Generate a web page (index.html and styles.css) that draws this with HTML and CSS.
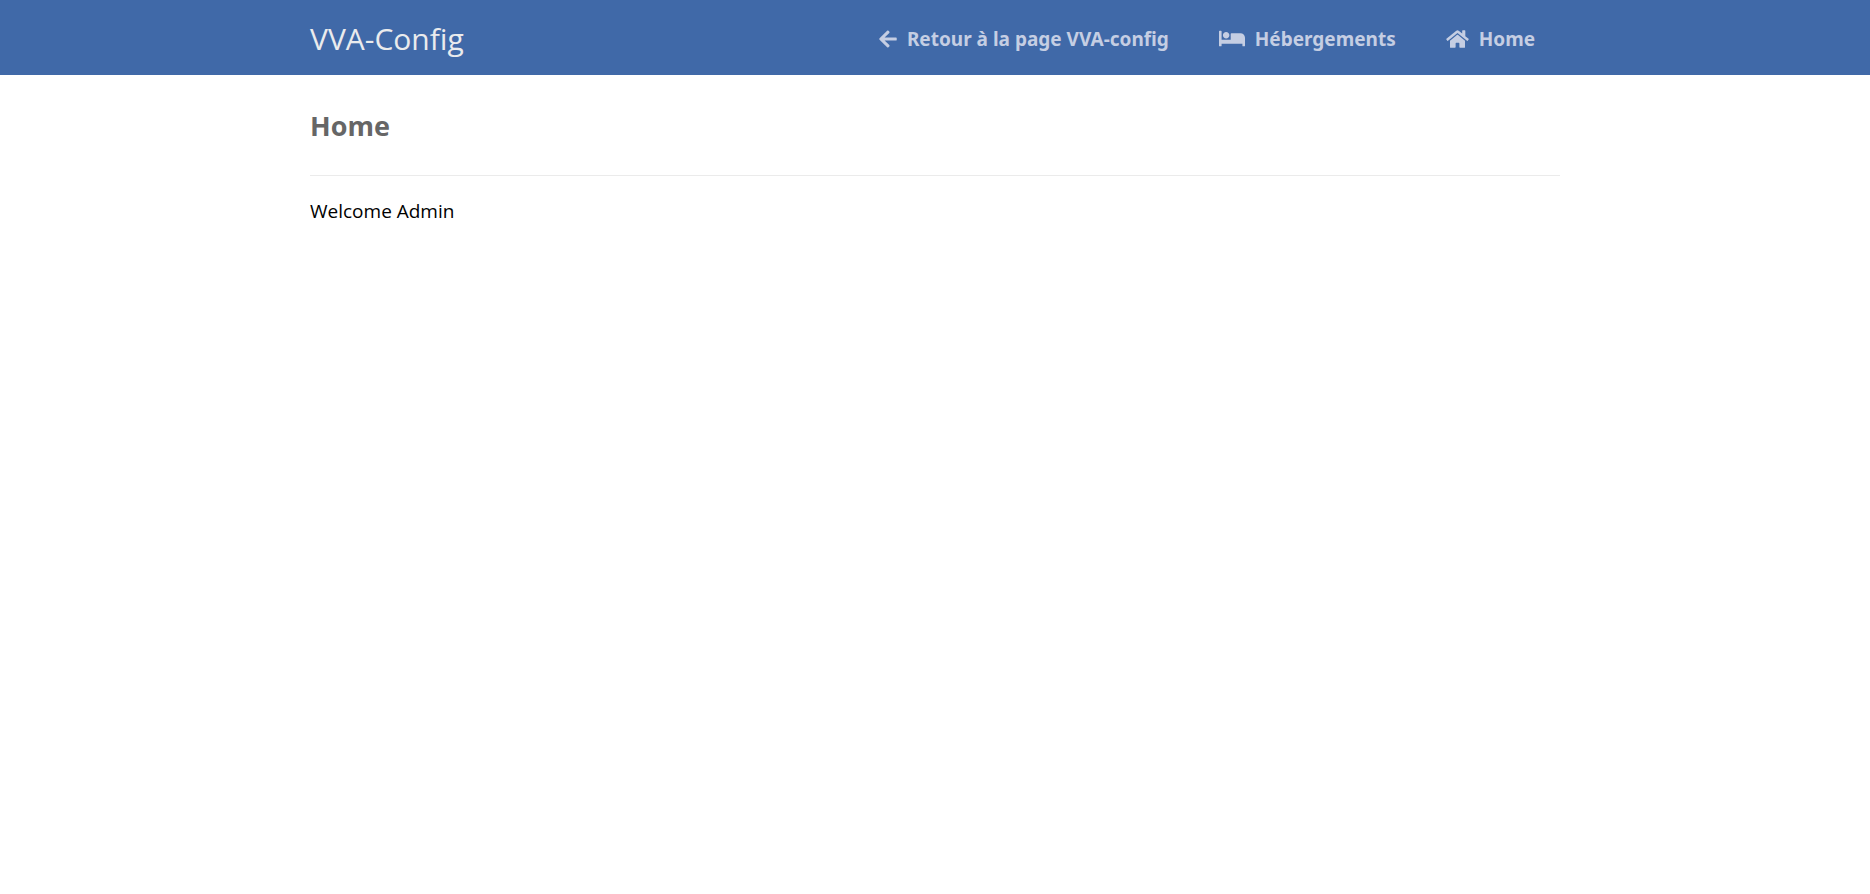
FILE: index.html
```html
<!DOCTYPE html>
<html lang="fr">
<head>
<meta charset="utf-8">
<title>Home</title>
<link rel="stylesheet" href="styles.css">
</head>
<body>
<nav class="navtop">
  <div class="container navtop-inner">
    <h1 class="brand">VVA-Config</h1>
    <a class="nav-link" href="#retour"><svg class="icon" width="18" height="20" viewBox="0 0 448 512" aria-hidden="true"><path d="M257.5 445.1l-22.2 22.2c-9.4 9.4-24.6 9.4-33.9 0L7 273c-9.4-9.4-9.4-24.6 0-33.9L201.4 44.7c9.4-9.4 24.6-9.4 33.9 0l22.2 22.2c9.5 9.5 9.3 25-.4 34.3L136.6 216H424c13.3 0 24 10.7 24 24v32c0 13.3-10.7 24-24 24H136.6l120.5 114.8c9.8 9.3 10 24.8.4 34.3z"/></svg>Retour à la page VVA-config</a>
    <a class="nav-link" href="#hebergements"><svg class="icon" width="26" height="21" viewBox="0 0 640 512" aria-hidden="true"><path d="M176 256c44.11 0 80-35.89 80-80s-35.89-80-80-80-80 35.89-80 80 35.89 80 80 80zm352-128H304c-8.84 0-16 7.16-16 16v144H64V80c0-8.84-7.16-16-16-16H16C7.16 64 0 71.16 0 80v352c0 8.84 7.16 16 16 16h32c8.84 0 16-7.16 16-16v-48h512v48c0 8.84 7.16 16 16 16h32c8.84 0 16-7.16 16-16V240c0-61.86-50.14-112-112-112z"/></svg>Hébergements</a>
    <a class="nav-link" href="#home"><svg class="icon" width="23" height="20" viewBox="0 0 576 512" aria-hidden="true"><path d="M280.37 148.26L96 300.11V464a16 16 0 0 0 16 16l112.06-.29a16 16 0 0 0 15.92-16V368a16 16 0 0 1 16-16h64a16 16 0 0 1 16 16v95.64a16 16 0 0 0 16 16.05L464 480a16 16 0 0 0 16-16V300L295.67 148.26a12.19 12.19 0 0 0-15.3 0zM571.6 251.47L488 182.56V44.05a12 12 0 0 0-12-12h-56a12 12 0 0 0-12 12v72.61L318.47 43a48 48 0 0 0-61 0L4.34 251.47a12 12 0 0 0-1.6 16.9l25.5 31A12 12 0 0 0 45.15 301l235.22-193.74a12.19 12.19 0 0 1 15.3 0L530.9 301a12 12 0 0 0 16.9-1.6l25.5-31a12 12 0 0 0-1.7-16.93z"/></svg>Home</a>
  </div>
</nav>
<main class="container">
  <h2 class="page-title">Home</h2>
  <p class="welcome">Welcome Admin</p>
</main>
</body>
</html>
```
FILE: styles.css
```css
* {
  box-sizing: border-box;
}

body {
  margin: 0;
  background: #ffffff;
  color: #000000;
  font-family: "Segoe UI", "Open Sans", "Noto Sans", sans-serif;
  font-size: 19px;
}

.container {
  max-width: 1250px;
  margin: 0 auto;
}

.navtop {
  background: #4069a8;
}

.navtop-inner {
  display: flex;
  align-items: center;
  min-height: 75px;
  padding-top: 2px;
}

.brand {
  flex: 1;
  margin: 0;
  color: #eaebed;
  font-size: 30px;
  font-weight: 400;
  line-height: 40px;
}

.nav-link {
  display: flex;
  align-items: center;
  gap: 10px;
  padding: 0 25px;
  color: #c5cee3;
  font-family: "Segoe UI", "Noto Sans", "Open Sans", sans-serif;
  font-size: 19px;
  font-weight: 700;
  line-height: 28px;
  text-decoration: none;
  white-space: nowrap;
}

.nav-link:hover {
  color: #eaebed;
}

.icon {
  flex: none;
  fill: currentColor;
}

.page-title {
  margin: 0;
  padding: 33px 0 31px;
  border-bottom: 1px solid #ebebeb;
  color: #666666;
  font-size: 27px;
  font-weight: 700;
  line-height: 36px;
}

.welcome {
  margin: 0;
  padding: 20px 0;
  line-height: 30px;
}
```
